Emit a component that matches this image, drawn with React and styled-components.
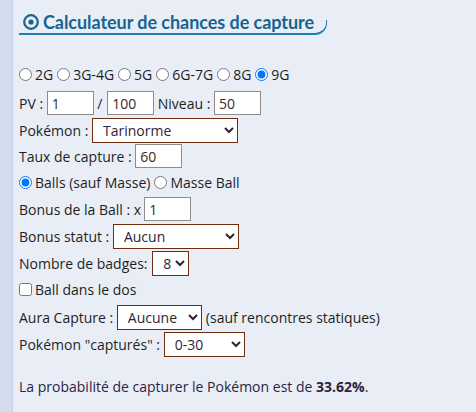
import React from 'react';
import styled, { createGlobalStyle } from 'styled-components';

const GlobalStyle = createGlobalStyle`
  html, body {
    margin: 0;
    padding: 0;
    background: #e9eef6;
  }
  body {
    font-family: 'Open Sans', 'Liberation Sans', sans-serif;
    font-size: 14px;
    color: #222;
  }
`;

const Page = styled.div`
  display: flex;
  min-height: 412px;
`;

const Sidebar = styled.div`
  width: 12px;
  flex: none;
  background: #d3ddef;
  border-right: 1px solid #c6d1e4;
`;

const Content = styled.main`
  flex: 1;
  padding: 10px 0 0 6px;
`;

const Title = styled.h2`
  position: relative;
  display: flex;
  align-items: center;
  gap: 4px;
  box-sizing: border-box;
  margin: 0;
  width: 295px;
  height: 25px;
  padding: 0 0 0 4px;
  white-space: nowrap;
  font-family: Lato, 'Open Sans', sans-serif;
  font-size: 18px;
  font-weight: 700;
  letter-spacing: -0.05px;
  color: #17648f;
  border-bottom: 2px solid #1d7fb4;

  &::after {
    content: '';
    position: absolute;
    left: 100%;
    bottom: -2px;
    width: 12px;
    height: 13px;
    border-right: 1.5px solid #1d7fb4;
    border-bottom: 2px solid #1d7fb4;
    border-bottom-right-radius: 12px;
  }
`;

const Form = styled.form`
  display: flex;
  flex-direction: column;
  margin-top: 26px;
`;

const Row = styled.div`
  display: flex;
  align-items: center;
  height: 26px;
  margin-top: ${({ $mt }) => $mt || 0}px;
  white-space: pre;
`;

const Radio = styled.input.attrs({ type: 'radio' })`
  width: 13px;
  height: 13px;
  margin: 0 3px 0 ${({ $first }) => ($first ? 0 : 4)}px;
`;

const Check = styled.input.attrs({ type: 'checkbox' })`
  width: 13px;
  height: 13px;
  margin: 0 3px 0 0;
`;

const TextInput = styled.input`
  box-sizing: border-box;
  width: 47px;
  height: 24px;
  margin: 0 0 0 ${({ $ml }) => $ml || 0}px;
  padding: 0 4px;
  border: 1px solid #8d8d8d;
  border-radius: 0;
  background: #fff;
  font-family: 'Open Sans', sans-serif;
  font-size: 14px;
  color: #3b2a25;
  outline: none;
`;

const Select = styled.select`
  box-sizing: border-box;
  width: ${({ $w }) => $w}px;
  height: 25px;
  margin: 0 4px 0 ${({ $ml }) => $ml || 0}px;
  padding: 0 0 0 6px;
  border: 1px solid #6e2d0c;
  border-radius: 0;
  background: #fff;
  font-family: 'Open Sans', sans-serif;
  font-size: 14px;
  color: #2f2436;
`;

const Label = styled.span`
  color: #1f1f1f;
`;

const Result = styled.p`
  margin: 17px 0 0;
  height: 26px;
  line-height: 26px;
  color: #2c2440;
`;

const TitleIcon = () => (
  <svg width="16" height="16" viewBox="0 0 16 16" aria-hidden="true">
    <circle cx="8" cy="8" r="6.8" fill="none" stroke="#17648f" strokeWidth="2.2" />
    <circle cx="8" cy="8" r="2.6" fill="#17648f" />
  </svg>
);

const gens = ['2G', '3G-4G', '5G', '6G-7G', '8G', '9G'];

export default function App() {
  return (
    <Page>
      <GlobalStyle />
      <Sidebar />
      <Content>
        <Title>
          <TitleIcon />
          Calculateur de chances de capture
        </Title>
        <Form>
          <Row>
            {gens.map((g, i) => (
              <React.Fragment key={g}>
                <Radio name="gen" $first={i === 0} defaultChecked={g === '9G'} />
                <Label>{g}</Label>
              </React.Fragment>
            ))}
          </Row>
          <Row $mt={3}>
            <Label>PV : </Label>
            <TextInput defaultValue="1" />
            <Label> / </Label>
            <TextInput defaultValue="100" $ml={1} />
            <Label> Niveau : </Label>
            <TextInput defaultValue="50" />
          </Row>
          <Row $mt={1}>
            <Label>Pokémon : </Label>
            <Select $w={146} defaultValue="Tarinorme">
              <option>Tarinorme</option>
            </Select>
          </Row>
          <Row>
            <Label>Taux de capture : </Label>
            <TextInput defaultValue="60" />
          </Row>
          <Row>
            <Radio name="ball" $first defaultChecked />
            <Label>Balls (sauf Masse)</Label>
            <Radio name="ball" />
            <Label>Masse Ball</Label>
          </Row>
          <Row $mt={1}>
            <Label>Bonus de la Ball : x</Label>
            <TextInput defaultValue="1" $ml={3} />
          </Row>
          <Row $mt={1}>
            <Label>Bonus statut : </Label>
            <Select $w={126}>
              <option>Aucun</option>
            </Select>
          </Row>
          <Row $mt={1}>
            <Label>Nombre de badges: </Label>
            <Select $w={37} $ml={1} defaultValue="8">
              <option>8</option>
            </Select>
          </Row>
          <Row>
            <Check />
            <Label>Ball dans le dos</Label>
          </Row>
          <Row $mt={2}>
            <Label>Aura Capture : </Label>
            <Select $w={85}>
              <option>Aucune</option>
            </Select>
            <Label>(sauf rencontres statiques)</Label>
          </Row>
          <Row $mt={1}>
            <Label>Pokémon "capturés" : </Label>
            <Select $w={81}>
              <option>0-30</option>
            </Select>
          </Row>
          <Result>
            La probabilité de capturer le Pokémon est de <b>33.62%</b>.
          </Result>
        </Form>
      </Content>
    </Page>
  );
}
